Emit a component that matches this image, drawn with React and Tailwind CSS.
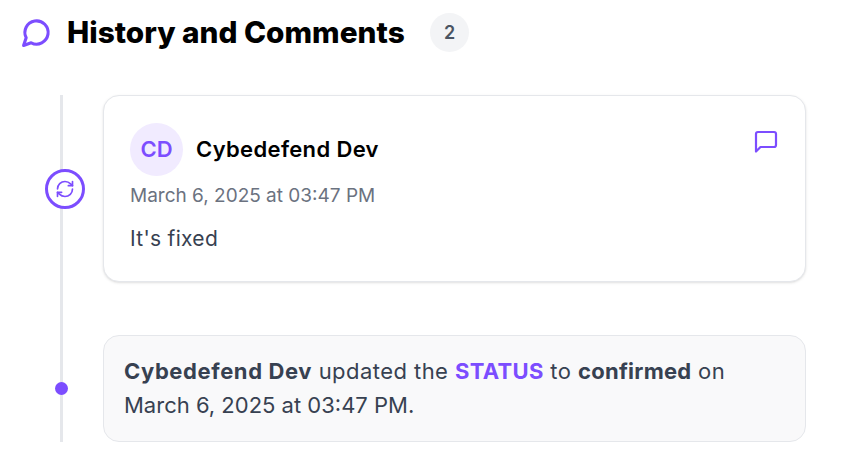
import { RefreshCw } from 'lucide-react';

function ChatIcon() {
    return (
        <svg viewBox="0 0 24 24" fill="none" stroke="currentColor" strokeWidth="2.4" strokeLinecap="round" strokeLinejoin="round" className="size-[31px] text-[#7c4dff]">
            <path d="M7.9 20A9 9 0 1 0 4 16.1L2 22Z" />
        </svg>
    );
}

function ReplyIcon() {
    return (
        <svg viewBox="0 0 24 24" fill="none" stroke="currentColor" strokeWidth="2.2" strokeLinecap="round" strokeLinejoin="round" className="mb-[15px] mr-px size-6 text-[#7c4dff]">
            <path d="M22 15a2 2 0 0 1-2 2H6.5L2 21.5V4a2 2 0 0 1 2-2h16a2 2 0 0 1 2 2z" />
        </svg>
    );
}

export default function App() {
    return (
        <div className="h-[471px] w-[843px] overflow-hidden bg-white pl-[21px] pt-[13px] font-['Inter',sans-serif]">
            <header className="flex h-[39px] items-center">
                <ChatIcon />
                <h2 className="ml-[15px] w-[337px] text-[29.75px] font-extrabold whitespace-nowrap text-black">History and Comments</h2>
                <span className="ml-[26px] flex size-[39px] items-center justify-center rounded-full bg-[#f3f4f6] text-lg font-semibold text-[#4b5563]">2</span>
            </header>

            <div className="relative mt-[43px] flex w-[785px] flex-col gap-[53px] pl-[82px]">
                <div className="absolute bottom-0 left-[39px] top-0 w-[3px] bg-[#e5e7eb]" />

                <section className="relative h-[187px] rounded-2xl border border-[#e5e7eb] bg-white pl-[26px] pr-[26px] pt-[27px] shadow-sm">
                    <div className="absolute left-[-59px] top-[73px] flex size-[39.5px] items-center justify-center rounded-full border-[3px] border-[#7c4dff] bg-white">
                        <RefreshCw className="size-5 text-[#7c4dff]" strokeWidth={2} />
                    </div>
                    <div className="flex items-center justify-between">
                        <div className="flex items-center gap-[13px]">
                            <div className="flex size-[53px] items-center justify-center rounded-full bg-[#f1ebff] text-[22px] font-semibold text-[#7c4dff]">CD</div>
                            <span className="text-[22px] font-semibold tracking-[0.35px] text-black">Cybedefend Dev</span>
                        </div>
                        <ReplyIcon />
                    </div>
                    <p className="mt-[6px] text-[19px] text-[#6b7280]">March 6, 2025 at 03:47 PM</p>
                    <p className="mt-3 text-[21px] tracking-[0.3px] text-[#374151]">It's fixed</p>
                </section>

                <section className="relative h-[107px] rounded-2xl border border-[#e5e7eb] bg-[#f9f9fa] px-5 pt-[18px] text-[22px] leading-[34px] tracking-[0.45px] text-[#374151]">
                    <div className="absolute left-[-49px] top-[46px] size-[13px] rounded-full bg-[#7c4dff]" />
                    <p>
                        <strong className="font-bold tracking-[0.6px]">Cybedefend Dev</strong> updated the{' '}
                        <strong className="font-bold tracking-[0.3px] text-[#7c4dff]">STATUS</strong> to{' '}
                        <strong className="font-bold tracking-[0.25px]">confirmed</strong> on{' '}
                        <span className="tracking-normal">March 6, 2025 at 03:47 PM.</span>
                    </p>
                </section>
            </div>
        </div>
    );
}
